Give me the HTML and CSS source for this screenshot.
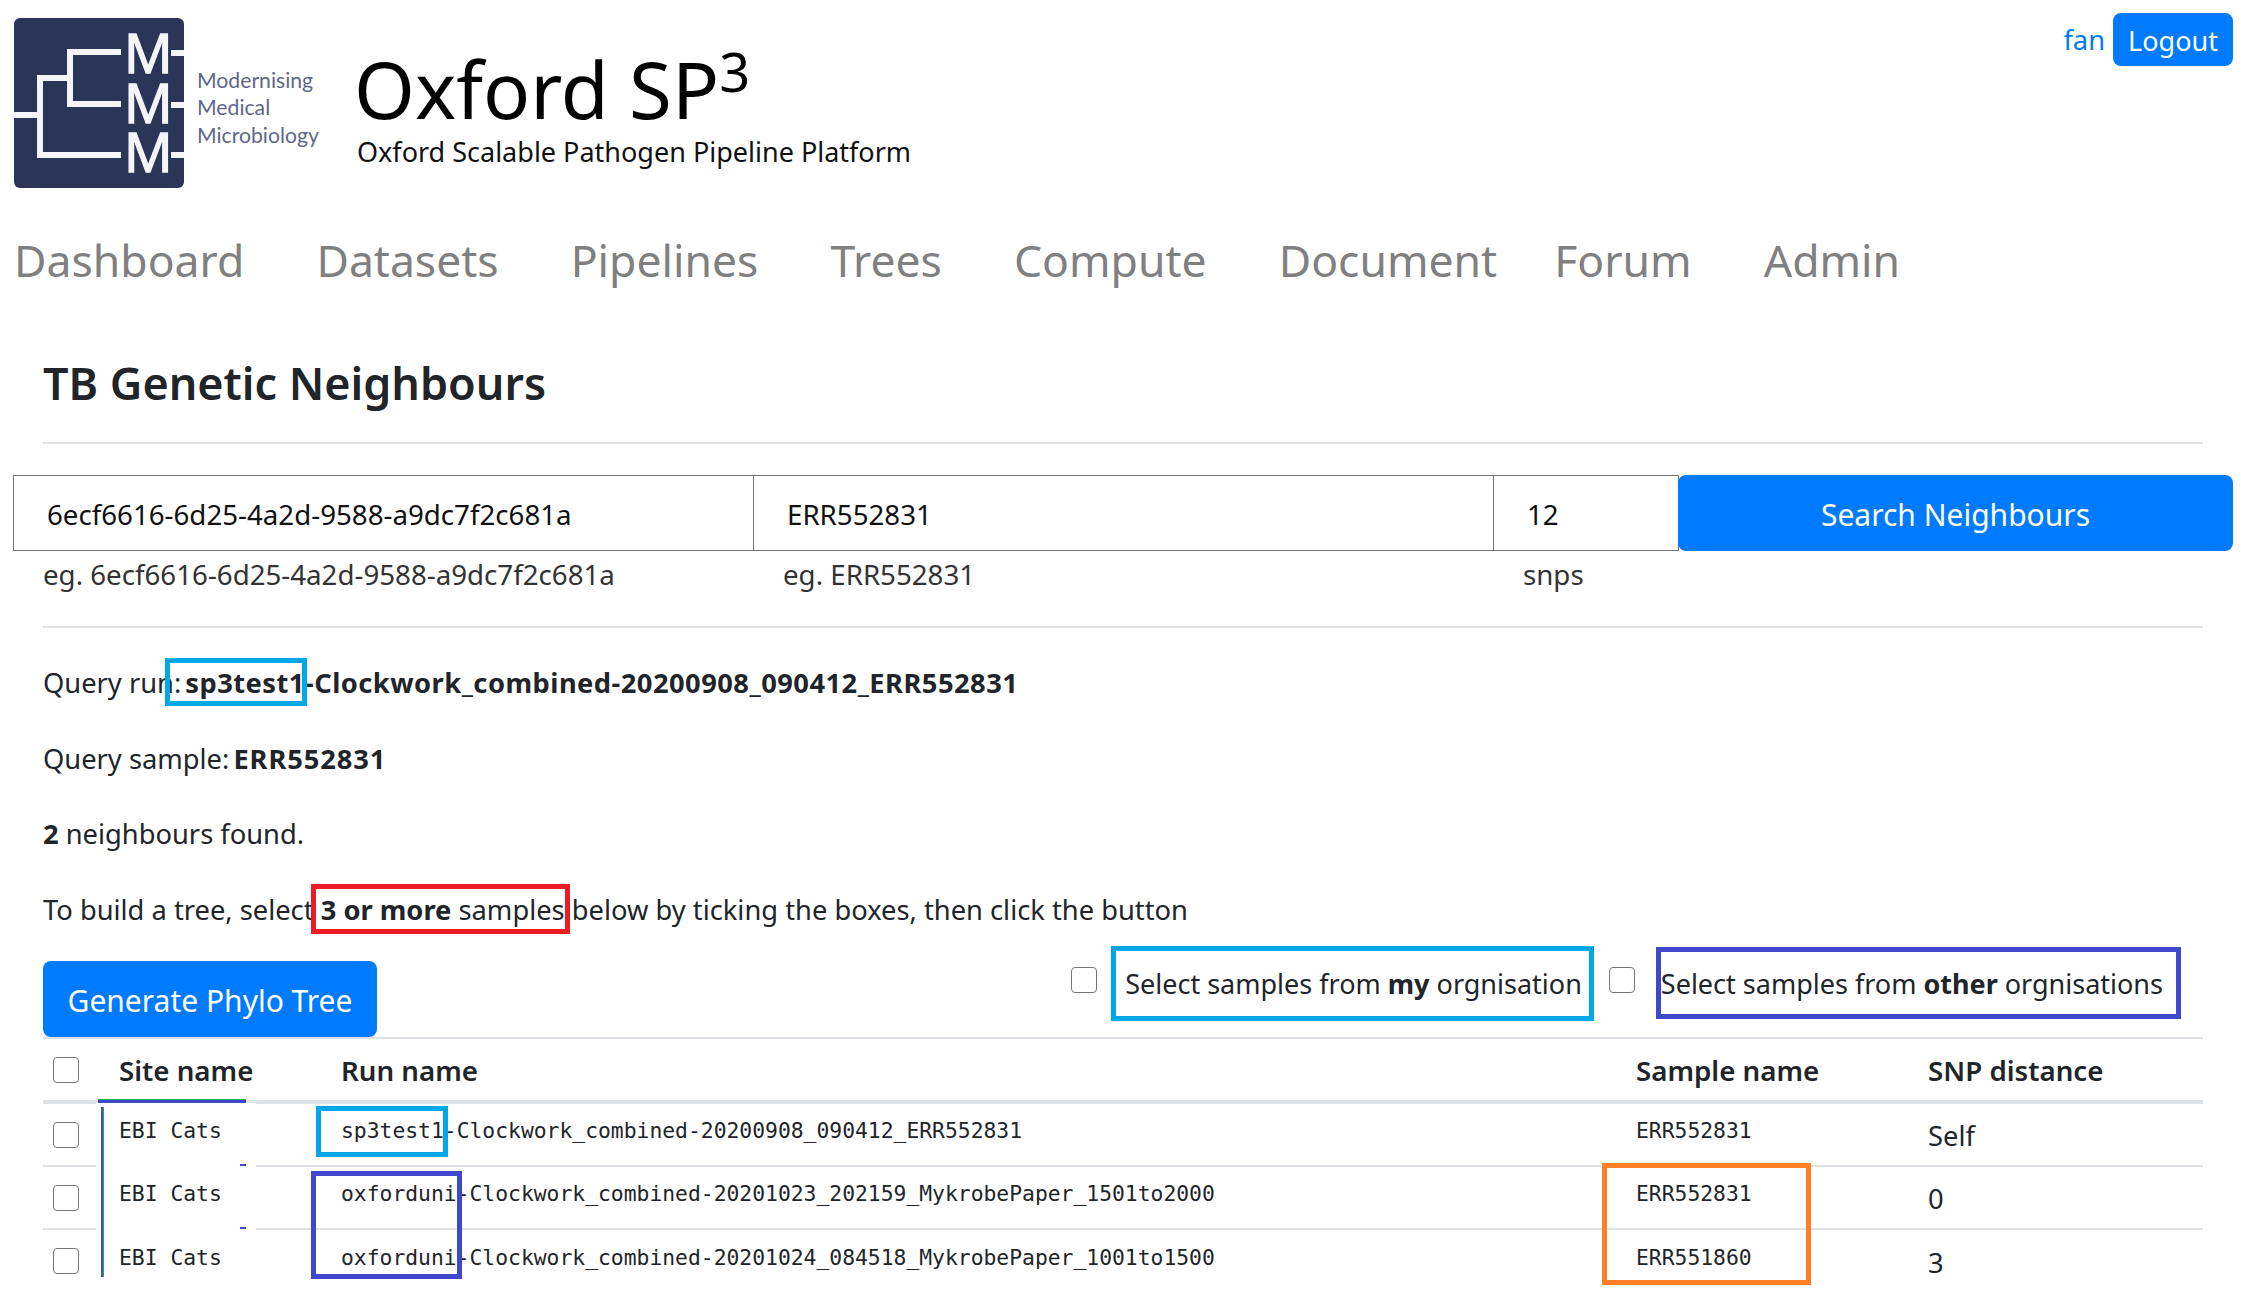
FILE: index.html
```html
<!DOCTYPE html>
<html lang="en">
<head>
    <meta charset="UTF-8">
    <meta name="viewport" content="width=device-width, initial-scale=1.0">
    <title>Oxford SP3</title>
    <link rel="stylesheet" href="styles.css">
</head>
<body>
    <header class="top">
        <svg class="logo" width="310" height="170" viewBox="14 18 310 170">
            <rect x="14" y="18" width="170" height="170" rx="6" fill="#2b3558"/>
            <g fill="none" stroke="#f4f5f8" stroke-width="6">
                <path d="M121 52H70V104H121"/>
                <path d="M14 115H40V78H68"/>
                <path d="M40 115V155H121"/>
                <path d="M171 53H184M171 105H184M171 155H184"/>
            </g>
            <g class="logo-m">
                <text x="124" y="73">M</text>
                <text x="124" y="123">M</text>
                <text x="124" y="172">M</text>
            </g>
            <g class="logo-text">
                <text x="197" y="88">Modernising</text>
                <text x="197" y="115">Medical</text>
                <text x="197" y="143">Microbiology</text>
            </g>
        </svg>
        <div class="brand">
            <div class="brand-title">Oxford SP<sup>3</sup></div>
            <div class="brand-sub">Oxford Scalable Pathogen Pipeline Platform</div>
        </div>
        <div class="user">
            <a href="#">fan</a>
            <button class="btn btn-small">Logout</button>
        </div>
    </header>

    <nav class="nav">
        <a href="#">Dashboard</a>
        <a href="#">Datasets</a>
        <a href="#">Pipelines</a>
        <a href="#">Trees</a>
        <a href="#">Compute</a>
        <a href="#" class="tight">Document</a>
        <a href="#">Forum</a>
        <a href="#">Admin</a>
    </nav>

    <main class="content">
        <h2>TB Genetic Neighbours</h2>
        <hr>

        <form class="search">
            <input type="text" value="6ecf6616-6d25-4a2d-9588-a9dc7f2c681a">
            <input type="text" value="ERR552831">
            <input type="text" value="12">
            <button type="button" class="btn btn-big">Search Neighbours</button>
        </form>
        <div class="hints">
            <span>eg. 6ecf6616-6d25-4a2d-9588-a9dc7f2c681a</span>
            <span>eg. ERR552831</span>
            <span>snps</span>
        </div>
        <hr class="hr-second">

        <p>Query run: <b class="wide">sp3test1-Clockwork_combined-20200908_090412_ERR552831</b></p>
        <p>Query sample: <b class="wide wider">ERR552831</b></p>
        <p><b>2</b> neighbours found.</p>
        <p>To build a tree, select <b>3 or more</b> samples below by ticking the boxes, then click the button</p>

        <div class="actions">
            <button type="button" class="btn btn-big btn-tree">Generate Phylo Tree</button>
            <div class="selects">
                <label><input type="checkbox"><span>Select samples from <b>my</b> orgnisation</span></label>
                <label><input type="checkbox"><span>Select samples from <b>other</b> orgnisations</span></label>
            </div>
        </div>

        <table>
            <thead>
                <tr>
                    <th class="col-check"><input type="checkbox"></th>
                    <th class="col-site">Site name</th>
                    <th class="col-run">Run name</th>
                    <th class="col-sample">Sample name</th>
                    <th>SNP distance</th>
                </tr>
            </thead>
            <tbody>
                <tr>
                    <td><input type="checkbox"></td>
                    <td class="mono">EBI Cats</td>
                    <td class="mono">sp3test1-Clockwork_combined-20200908_090412_ERR552831</td>
                    <td class="mono">ERR552831</td>
                    <td class="snp">Self</td>
                </tr>
                <tr>
                    <td><input type="checkbox"></td>
                    <td class="mono">EBI Cats</td>
                    <td class="mono">oxforduni-Clockwork_combined-20201023_202159_MykrobePaper_1501to2000</td>
                    <td class="mono">ERR552831</td>
                    <td class="snp">0</td>
                </tr>
                <tr>
                    <td><input type="checkbox"></td>
                    <td class="mono">EBI Cats</td>
                    <td class="mono">oxforduni-Clockwork_combined-20201024_084518_MykrobePaper_1001to1500</td>
                    <td class="mono">ERR551860</td>
                    <td class="snp">3</td>
                </tr>
            </tbody>
        </table>
    </main>

    <!-- annotation boxes drawn over the screenshot -->
    <div class="mark mark-cyan box-query"></div>
    <div class="mark mark-red box-more"></div>
    <div class="mark mark-cyan box-mine"></div>
    <div class="mark mark-blue box-other"></div>
    <div class="mark mark-cyan box-run"></div>
    <div class="mark mark-blue box-runs"></div>
    <div class="mark mark-orange box-samples"></div>
    <div class="site-gap gap-top"></div>
    <div class="site-gap gap-one"></div>
    <div class="site-gap gap-two"></div>
    <div class="site-line"></div>
    <div class="site-top"></div>
</body>
</html>
```

FILE: styles.css
```css
/* Basic page styling */
body {
    position: relative;
    margin: 0;
    height: 1306px;
    overflow: hidden;
    background-color: #fff;
    color: #212529;
    font-family: "Noto Sans", Arial, sans-serif;
    font-size: 27.3px;
    line-height: 44px;
}

.top {
    display: flex;
    height: 206px;
    padding: 18px 8px 0 14px;
    box-sizing: border-box;
}

.logo {
    flex: none;
}

.logo-m text {
    font-family: "Open Sans", sans-serif;
    font-size: 54px;
    fill: #f4f5f8;
    stroke: #f4f5f8;
    stroke-width: 1.5px;
}

.logo-text text {
    font-family: Lato, sans-serif;
    font-size: 21.2px;
    fill: #5f678a;
}

.brand {
    margin-left: 30px;
    padding-top: 26px;
    color: #000;
}

.brand-title {
    font-size: 78px;
    line-height: 90px;
}

.brand-title sup {
    font-size: 54px;
    line-height: 0;
}

.brand-sub {
    margin-left: 3px;
    font-size: 27px;
    line-height: 36px;
    color: #111;
}

.user {
    display: flex;
    align-items: flex-start;
    gap: 8px;
    margin-left: auto;
    margin-top: -5px;
}

.user a {
    color: #007bff;
    text-decoration: none;
    line-height: 54px;
}

.btn {
    padding: 0;
    border: none;
    border-radius: 8px;
    background-color: #007bff;
    color: #fff;
    font: inherit;
    cursor: pointer;
}

.btn-small {
    width: 120px;
    height: 53px;
    padding-top: 2px;
    font-size: 27px;
}

.btn-big {
    padding-top: 3px;
    font-size: 30px;
}

.nav {
    display: flex;
    gap: 72px;
    height: 108px;
    padding-left: 14px;
    align-items: center;
    font-size: 44.5px;
}

.nav a {
    color: #808080;
    text-decoration: none;
}

.nav a.tight {
    margin-right: -15px;
}

.content {
    padding: 0 38px 0 43px;
}

h2 {
    margin: 0;
    padding-top: 39px;
    font-size: 44.9px;
    line-height: 60px;
    font-weight: 600;
}

hr {
    margin: 29px 0 0;
    border: none;
    border-top: 2px solid #dee2e6;
}

.search {
    display: flex;
    margin: 31px -30px 0 -30px;
    height: 76px;
}

.search input {
    box-sizing: border-box;
    height: 76px;
    padding: 2px 33px 0;
    border: 1px solid #767676;
    font: inherit;
    font-size: 27.7px;
    color: #111;
    width: 741px;
}

.search input:nth-child(2) {
    margin-left: -1px;
}

.search input:nth-child(3) {
    width: 186px;
    margin-left: -1px;
}

.search .btn {
    flex: 1;
    margin-left: -1px;
}

.hints {
    display: flex;
    height: 44px;
    margin-top: 1px;
    font-size: 27.7px;
    color: #333;
}

.hints span:nth-child(1),
.hints span:nth-child(2) {
    width: 740px;
}

.hr-second {
    margin-top: 30px;
}

p {
    margin: 0;
    padding-top: 32px;
    height: 43.6px;
}

.content p:first-of-type {
    padding-top: 33px;
}

.wide {
    margin-left: -3px;
    letter-spacing: 0.47px;
}

.wider {
    letter-spacing: 0.9px;
}

.actions {
    display: flex;
    justify-content: space-between;
    height: 76px;
    margin-top: 30px;
}

.btn-tree {
    width: 334px;
    height: 76px;
}

.selects {
    display: flex;
    gap: 27px;
    margin-right: 40px;
    font-size: 27px;
}

.selects label {
    display: flex;
    gap: 28px;
    margin-top: 1px;
}

.selects label + label {
    gap: 26px;
}

.selects input,
table input {
    appearance: none;
    display: block;
    width: 26px;
    height: 26px;
    margin: 0;
    border: 1px solid #767676;
    border-radius: 4px;
    background: #fff;
}

.selects input {
    margin-top: 5px;
}

table {
    width: 2160px;
    table-layout: fixed;
    border-collapse: collapse;
    border-top: 2px solid #dee2e6;
}

th {
    height: 61px;
    padding: 0 12px;
    border-bottom: 4px solid #dee2e6;
    text-align: left;
    font-size: 27.7px;
    font-weight: 600;
}

.col-check {
    width: 42px;
    padding-left: 10px;
}

.col-site {
    width: 198px;
}

.col-run {
    width: 1271px;
}

.col-sample {
    width: 268px;
}

td {
    height: 63px;
    padding: 0 12px;
    border-top: 2px solid #dee2e6;
    box-sizing: border-box;
}

td:first-child {
    padding-left: 10px;
}

tbody tr:first-child td {
    height: 64px;
    border-top: none;
}

.mono {
    font-family: "DejaVu Sans Mono", monospace;
    font-size: 21.35px;
    padding-bottom: 7px;
}

.snp {
    padding-top: 3px;
}

.mark {
    position: absolute;
    box-sizing: border-box;
    border: 5px solid;
}

.mark-cyan {
    border-color: #00a8e8;
}

.mark-blue {
    border-color: #3f48cc;
}

.mark-red {
    border-color: #ed1c24;
}

.mark-orange {
    border-color: #ff7f27;
}

.box-query {
    left: 165px;
    top: 658px;
    width: 142px;
    height: 48px;
}

.box-more {
    left: 311px;
    top: 884px;
    width: 259px;
    height: 50px;
}

.box-mine {
    left: 1111px;
    top: 946px;
    width: 483px;
    height: 75px;
}

.box-other {
    left: 1656px;
    top: 947px;
    width: 525px;
    height: 72px;
}

.box-run {
    left: 316px;
    top: 1106px;
    width: 132px;
    height: 51px;
}

.box-runs {
    left: 311px;
    top: 1171px;
    width: 151px;
    height: 108px;
}

.box-samples {
    left: 1602px;
    top: 1163px;
    width: 209px;
    height: 122px;
}

/* stray edit marks around the site column */
.site-line {
    position: absolute;
    left: 101px;
    top: 1107px;
    width: 2px;
    height: 170px;
    background-color: #3f48cc;
    box-shadow: 1px 0 0 #22b14c;
}

.site-top {
    position: absolute;
    left: 98px;
    top: 1100px;
    width: 148px;
    height: 3px;
    background-color: #3f48cc;
    box-shadow: 0 -1px 0 #22b14c;
}

.site-gap {
    position: absolute;
    left: 96px;
    width: 160px;
    height: 4px;
    background-color: #fff;
}

.gap-one::after,
.gap-two::after {
    content: "";
    position: absolute;
    left: 144px;
    top: 1px;
    width: 6px;
    height: 2px;
    background-color: #3f48cc;
}

.gap-top {
    top: 1103px;
}

.gap-one {
    top: 1163px;
}

.gap-two {
    top: 1226px;
}
```
